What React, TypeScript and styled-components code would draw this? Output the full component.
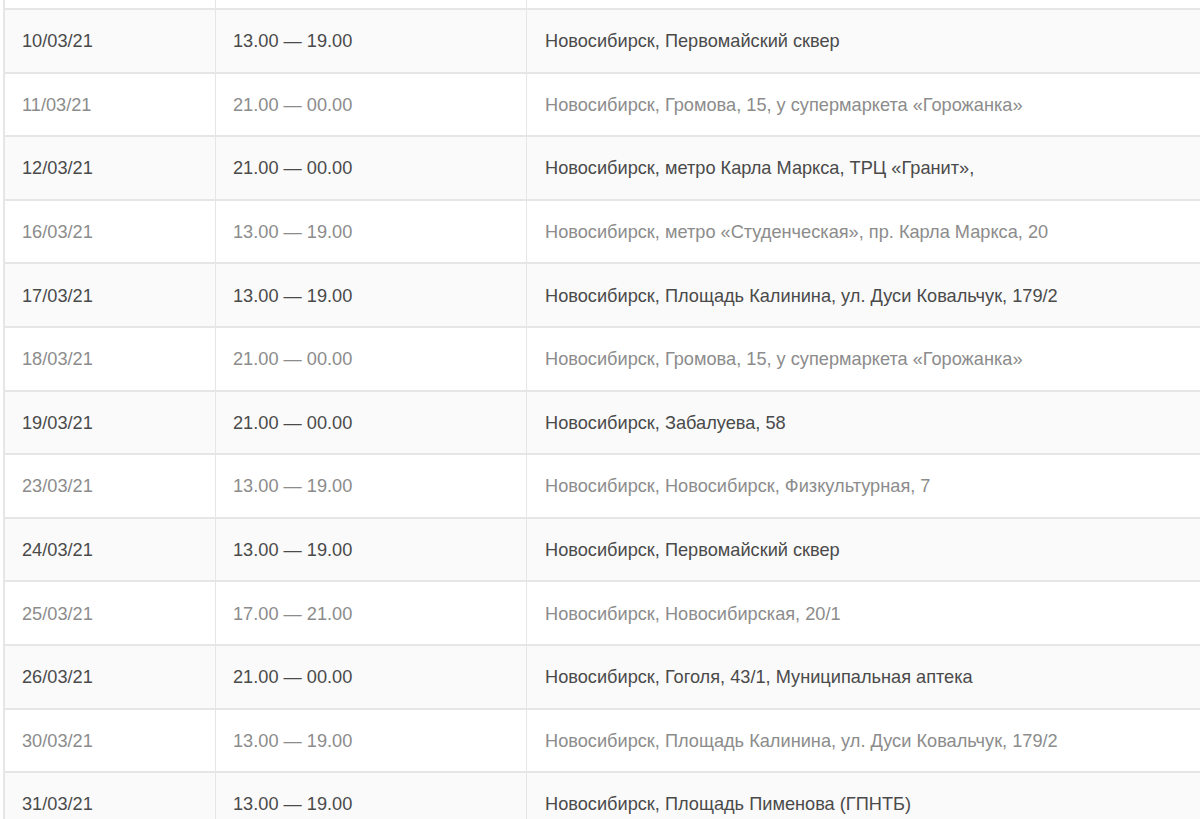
import styled, { createGlobalStyle } from 'styled-components'

const GlobalStyle = createGlobalStyle`
  html, body {
    margin: 0;
    padding: 0;
    background: #fff;
    overflow: hidden;
  }
  body {
    font-family: 'Liberation Sans', Arial, Helvetica, sans-serif;
  }
`

const Table = styled.div`
  width: 1230px;
  margin-left: 3px;
  border-left: 2px solid #e6e6e6;
`

const Row = styled.div<{ $alt?: boolean; $stub?: boolean }>`
  box-sizing: border-box;
  display: grid;
  grid-template-columns: 211px 311px 1fr;
  height: ${({ $stub }) => ($stub ? '10px' : '63.6px')};
  border-bottom: 2px solid #e6e6e6;
  background: ${({ $alt }) => ($alt ? '#fafafa' : '#fff')};
  color: ${({ $alt }) => ($alt ? '#4a4a4a' : '#8c8c8c')};
`

const Cell = styled.div`
  display: flex;
  align-items: center;
  padding: 2px 0 0 17px;
  font-size: 18.2px;
  white-space: nowrap;
  border-right: 1.5px solid #e6e6e6;

  &:last-child {
    border-right: none;
    padding-left: 18px;
  }
`

type Item = {
  date: string
  time: string
  place: string
}

const items: Item[] = [
  { date: '10/03/21', time: '13.00 — 19.00', place: 'Новосибирск, Первомайский сквер' },
  { date: '11/03/21', time: '21.00 — 00.00', place: 'Новосибирск, Громова, 15, у супермаркета «Горожанка»' },
  { date: '12/03/21', time: '21.00 — 00.00', place: 'Новосибирск, метро Карла Маркса, ТРЦ «Гранит»,' },
  { date: '16/03/21', time: '13.00 — 19.00', place: 'Новосибирск, метро «Студенческая», пр. Карла Маркса, 20' },
  { date: '17/03/21', time: '13.00 — 19.00', place: 'Новосибирск, Площадь Калинина, ул. Дуси Ковальчук, 179/2' },
  { date: '18/03/21', time: '21.00 — 00.00', place: 'Новосибирск, Громова, 15, у супермаркета «Горожанка»' },
  { date: '19/03/21', time: '21.00 — 00.00', place: 'Новосибирск, Забалуева, 58' },
  { date: '23/03/21', time: '13.00 — 19.00', place: 'Новосибирск, Новосибирск, Физкультурная, 7' },
  { date: '24/03/21', time: '13.00 — 19.00', place: 'Новосибирск, Первомайский сквер' },
  { date: '25/03/21', time: '17.00 — 21.00', place: 'Новосибирск, Новосибирская, 20/1' },
  { date: '26/03/21', time: '21.00 — 00.00', place: 'Новосибирск, Гоголя, 43/1, Муниципальная аптека' },
  { date: '30/03/21', time: '13.00 — 19.00', place: 'Новосибирск, Площадь Калинина, ул. Дуси Ковальчук, 179/2' },
  { date: '31/03/21', time: '13.00 — 19.00', place: 'Новосибирск, Площадь Пименова (ГПНТБ)' },
]

const App = () => {
  return (
    <>
      <GlobalStyle />
      <Table>
        {/* tail of the previous row, scrolled off the top */}
        <Row $stub>
          <Cell />
          <Cell />
          <Cell />
        </Row>
        {items.map((item, i) => (
          <Row key={item.date} $alt={i % 2 === 0}>
            <Cell>{item.date}</Cell>
            <Cell>{item.time}</Cell>
            <Cell>{item.place}</Cell>
          </Row>
        ))}
      </Table>
    </>
  )
}

export default App
